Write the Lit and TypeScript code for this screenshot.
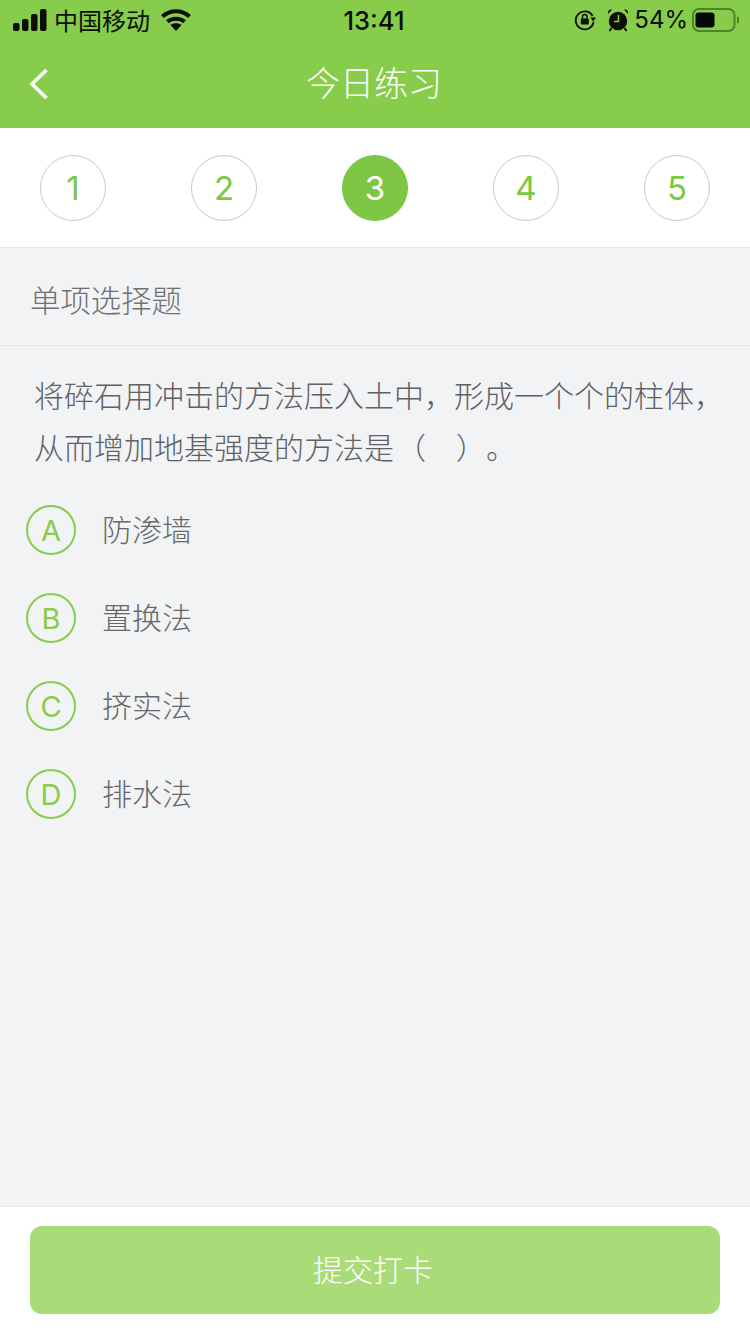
import { LitElement, html, css } from "lit";
import { customElement } from "lit/decorators.js";

@customElement("app-root")
export class AppRoot extends LitElement {
  static styles = css`
    :host { display: block; width: 750px; height: 1334px; font-family: "Noto Sans CJK SC", sans-serif; overflow: hidden; text-spacing-trim: space-all; }
    .page { display: flex; flex-direction: column; height: 1334px; background: #f2f3f5; }
    .head { background: #87cc4b; height: 128px; display: flex; flex-direction: column; flex: none; }
    .status { height: 40px; display: flex; align-items: center; justify-content: space-between; color: #0b0f06; padding: 0 11px 0 13px; position: relative; }
    .st-left, .st-right { display: flex; align-items: center; }
    .carrier { font-size: 24px; margin-left: 7px; line-height: 40px; }
    .wifi { margin-left: 11px; }
    .time { position: absolute; left: 0; right: 0; text-align: center; font: 500 25.5px/40px "Inter", sans-serif; padding: 1px 2px 0 0; }
    .pct { font: 400 24px/40px "Inter", sans-serif; margin: 0 4px 0 5px; }
    .alarm { margin-left: 11px; }
    .nav { flex: 1; display: flex; align-items: center; justify-content: center; position: relative; color: #fff; font-size: 34px; font-weight: 300; padding: 0 2px 6px 0; }
    .back { position: absolute; left: 29px; top: 28px; }
    .steps { background: #fff; height: 119px; flex: none; border-bottom: 1px solid #e6e7e9; display: flex; align-items: center; justify-content: space-between; padding: 0 40px; }
    .step { width: 66px; height: 66px; box-sizing: border-box; border-radius: 50%; border: 1px solid #c9c9c9; color: #7dc744; display: flex; align-items: center; justify-content: center; font: 400 33px/1 "Inter", sans-serif; padding-top: 2px; }
    .step.on { background: #7dc744; border-color: #7dc744; color: #fff; }
    .type { flex: none; box-sizing: border-box; border-bottom: 1px solid #e6e7e9; padding: 4px 0 0 30px; display: flex; align-items: center; font-size: 30.4px; font-weight: 300; color: #6f7174; height: 98px; }
    .main { flex: 1; }
    .q { margin: 0; padding: 22px 0 0 34px; font-size: 30px; line-height: 52px; color: #5f6164; font-weight: 300; white-space: nowrap; }
    .paren { margin-left: 2px; }
    .opts { display: flex; flex-direction: column; gap: 38px; padding: 33px 0 0 26px; }
    .opt { display: flex; align-items: center; height: 50px; font-size: 30px; color: #65676a; font-weight: 300; }
    .opt span.t { padding-bottom: 4px; }
    .letter { width: 50px; height: 50px; box-sizing: border-box; border: 2px solid #87cc4b; border-radius: 50%; color: #87cc4b; display: flex; align-items: center; justify-content: center; font: 400 29px/1 "Inter", sans-serif; margin-right: 26px; padding-top: 1px; }
    .foot { flex: none; background: #fff; height: 128px; box-sizing: border-box; border-top: 1px solid #e6e7e9; padding: 19px 30px 20px; }
    .btn { height: 88px; box-sizing: border-box; border-radius: 12px; background: #a9dc78; color: #fff; display: flex; align-items: center; justify-content: center; font-size: 30px; font-weight: 300; padding: 0 4px 4px 0; }
  `;

  render() {
    const steps = [1, 2, 3, 4, 5];
    const opts = [["A", "防渗墙"], ["B", "置换法"], ["C", "挤实法"], ["D", "排水法"]];
    return html`
      <div class="page">
        <div class="head">
          <div class="status">
            <div class="st-left">
              <svg width="34" height="22" viewBox="0 0 34 22" fill="#0b0f06">
                <rect x="0" y="14" width="6.5" height="8" rx="2"/>
                <rect x="9" y="10" width="6.5" height="12" rx="2"/>
                <rect x="18" y="5" width="6.5" height="17" rx="2"/>
                <rect x="27" y="0" width="6.5" height="22" rx="2"/>
              </svg>
              <span class="carrier">中国移动</span>
              <svg class="wifi" width="30" height="22" viewBox="0 0 30 22" fill="none" stroke="#0b0f06" stroke-width="4">
                <path d="M1.5 7.5 C9 0.5 21 0.5 28.5 7.5"/>
                <path d="M6.5 12.8 C11 8.8 19 8.8 23.5 12.8"/>
                <path d="M15 22 L9.4 16 C12.5 13.6 17.5 13.6 20.6 16 Z" fill="#0b0f06" stroke="none"/>
              </svg>
            </div>
            <div class="time">13:41</div>
            <div class="st-right">
              <svg width="22" height="22" viewBox="0 0 22 22" fill="none" stroke="#0b0f06" stroke-width="1.8">
                <path d="M18.6 7 A9 9 0 1 0 19.6 13"/>
                <path d="M16.4 8.6 L22 8.6 L19.2 12.4 Z" fill="#0b0f06" stroke="none"/>
                <rect x="6.8" y="9.6" width="8" height="6" rx="1" fill="#0b0f06" stroke="none"/>
                <path d="M8.5 10 V7.8 a2.3 2.3 0 0 1 4.6 0 V10" stroke-width="1.4"/>
              </svg>
              <svg class="alarm" width="22" height="24" viewBox="0 0 22 24" fill="#0b0f06">
                <circle cx="11" cy="13" r="9.2"/>
                <path d="M1 6 L5 1.6 C3 .8 .2 2.6 1 6Z M21 6 L17 1.6 C19 .8 21.8 2.6 21 6Z"/>
                <path d="M4.5 20 L2.5 23 M17.5 20 L19.5 23" stroke="#0b0f06" stroke-width="2"/>
                <path d="M11.5 7 V13.5 H7" fill="none" stroke="#87cc4b" stroke-width="1.5"/>
              </svg>
              <span class="pct">54%</span>
              <svg width="47" height="24" viewBox="0 0 47 24">
                <rect x="1" y="1" width="41.5" height="22" rx="6" fill="none" stroke="#4f8229" stroke-width="2"/>
                <rect x="3.5" y="4.5" width="19" height="15" rx="3" fill="#050805"/>
                <path d="M45 8.5 a3.5 3.5 0 0 1 0 7" fill="#4f8229"/>
              </svg>
            </div>
          </div>
          <div class="nav">
            <svg class="back" width="20" height="32" viewBox="0 0 20 32" fill="none" stroke="#fff" stroke-width="3.6">
              <path d="M17.5 2 L3 16 L17.5 30"/>
            </svg>
            今日练习
          </div>
        </div>
        <div class="steps">
          ${steps.map((n) => html`<div class="step ${n === 3 ? "on" : ""}">${n}</div>`)}
        </div>
        <div class="type">单项选择题</div>
        <div class="main">
          <p class="q">将碎石用冲击的方法压入土中，形成一个个的柱体，<br />从而增加地基强度的方法是<span class="paren">（　）。</span></p>
          <div class="opts">
            ${opts.map(([l, t]) => html`<div class="opt"><span class="letter">${l}</span><span class="t">${t}</span></div>`)}
          </div>
        </div>
        <div class="foot"><div class="btn">提交打卡</div></div>
      </div>
    `;
  }
}
